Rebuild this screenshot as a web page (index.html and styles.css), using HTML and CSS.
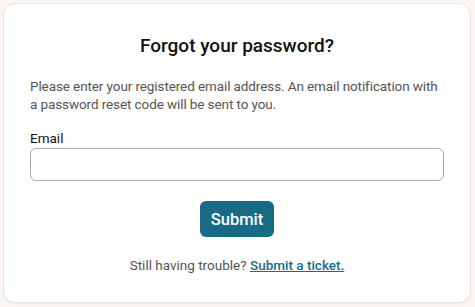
FILE: index.html
```html
<!DOCTYPE html>
<html lang="en">
<head>
  <meta charset="UTF-8">
  <meta name="viewport" content="width=device-width, initial-scale=1.0">
  <title>Forgot your password?</title>
<link rel="stylesheet" href="styles.css">
</head>
<body>
  <div class="card">
    <h2>Forgot your password?</h2>
    <p class="intro">Please enter your registered email address. An email notification with a password reset code will be sent to you.</p>
    <form class="reset-form" onsubmit="return false">
      <label for="email">Email</label>
      <input type="email" id="email" name="email">
      <button type="submit">Submit</button>
    </form>
    <p class="help">Still having trouble? <a href="#">Submit a ticket.</a></p>
  </div>
</body>
</html>
```

FILE: styles.css
```css
body {
  font-family: Roboto, "Noto Sans", sans-serif;
  background-color: #fbf6f3;
  color: #111;
  margin: 0;
  padding: 3px 4px 5px 3px;
}

.card {
  background: #ffffff;
  border: 1px solid #e9e4e1;
  border-radius: 12px;
  padding: 31px 26px 28px;
  box-shadow: 0 1px 2px rgba(0, 0, 0, 0.06);
}

.card h2 {
  margin: 0 0 20px;
  font-size: 19px;
  line-height: 22px;
  font-weight: 500;
  text-align: center;
  color: #111;
}

.intro {
  margin: 0 0 17px;
  font-size: 13.5px;
  line-height: 18px;
  letter-spacing: -0.1px;
  color: #555;
}

.reset-form {
  display: flex;
  flex-direction: column;
}

.reset-form label {
  font-size: 13.5px;
  line-height: 17px;
  margin-bottom: 1px;
}

.reset-form input {
  height: 33px;
  box-sizing: border-box;
  border: 1px solid #aaa;
  border-radius: 6px;
  font-size: 14px;
  padding: 0 10px;
  margin: 0 0 20px;
}

.reset-form button {
  align-self: center;
  width: 74px;
  height: 36px;
  border: none;
  border-radius: 6px;
  background-color: #186a85;
  color: white;
  font-family: inherit;
  font-size: 16.5px;
  font-weight: 500;
  cursor: pointer;
}

.help {
  margin: 19px 0 0;
  text-align: center;
  font-size: 13.5px;
  line-height: 18px;
  color: #555;
}

.help a {
  color: #1b6b87;
  font-weight: 500;
}
```
